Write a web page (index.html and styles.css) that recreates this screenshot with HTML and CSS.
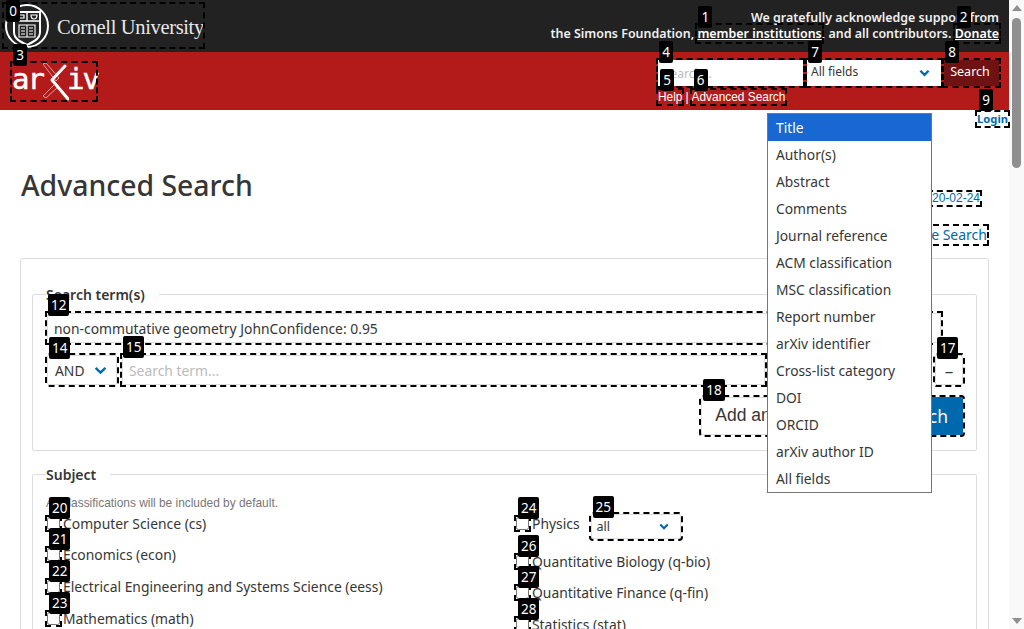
FILE: index.html
```html
<!DOCTYPE html>
<html lang="en">
<head>
<meta charset="utf-8">
<title>Advanced Search | arXiv</title>
<link rel="stylesheet" href="styles.css">
</head>
<body>
<div class="app">
<header class="topbar">
  <a class="mark cornell"><span class="badge">0</span>
    <svg class="seal" viewBox="0 0 46 46" width="46" height="46" aria-hidden="true">
      <circle cx="23" cy="23" r="21" fill="none" stroke="#fff" stroke-width="2"/>
      <path d="M10 9h26v20c0 7-7 10-13 13-6-3-13-6-13-13z" fill="#222" stroke="#fff" stroke-width="2"/>
      <path d="M10 18h26M23 9v9" stroke="#fff" stroke-width="1.400"/>
      <path d="M14 12h6v3h-6zM27 12h6c0 3-1.500 4-3 4s-3-1-3-4z" fill="none" stroke="#fff" stroke-width="1.200"/>
      <path d="M15 22h16v12H15zM23 22v12M17 25h4M17 28h4M17 31h4M25 25h4M25 28h4M25 31h4" fill="none" stroke="#fff" stroke-width="1.100"/>
    </svg>
    <span class="cornell-name">Cornell University</span>
  </a>
  <p class="thanks">We gratefully acknowledge support from<br>the Simons Foundation, <a class="mark thanks-link"><span class="badge">1</span>member institutions</a>, and all contributors. <a class="mark thanks-link"><span class="badge badge-donate">2</span>Donate</a></p>
</header>

<div class="redbar">
  <a class="mark logo"><span class="badge">3</span>
    <span class="logo-text">ar</span>
    <svg class="logo-x" viewBox="0 0 26 40" width="26" height="40" aria-hidden="true">
      <path d="M0 2 3 1 16 16 13 19Z" fill="none" stroke="#eeb9b9" stroke-width="0.800"/>
      <path d="M12 22 15 25 3 36 0 34Z" fill="none" stroke="#eeb9b9" stroke-width="0.800"/>
      <path d="M22 4 9 18 25 37" fill="none" stroke="#fff" stroke-width="3" stroke-linecap="round" stroke-linejoin="round"/>
    </svg>
    <span class="logo-text">iv</span>
  </a>
  <div class="quick">
    <div class="quick-row">
      <div class="mark"><span class="badge">4</span><input class="quick-input" placeholder="Search..."></div>
      <div class="mark quick-select"><span class="badge">7</span><span class="quick-value">All fields</span>
        <svg class="chev" viewBox="0 0 12 8" width="11" height="8" aria-hidden="true"><path d="M1.500 1.500 6 6l4.500-4.500" fill="none" stroke="#0068ac" stroke-width="2.500"/></svg>
      </div>
      <button class="mark quick-go" type="button"><span class="badge">8</span>Search</button>
    </div>
    <div class="quick-links">
      <a class="mark"><span class="badge">5</span>Help</a>
      <span class="sep">|</span>
      <a class="mark"><span class="badge">6</span>Advanced Search</a>
    </div>
  </div>
</div>

<div class="loginrow"><a class="mark login"><span class="badge">9</span>Login</a></div>

<main class="page">
  <div class="page-head">
    <h1>Advanced Search</h1>
    <div class="page-side">
      <a class="mark date"><span class="badge">10</span>Search v0.5.6 released 2020-02-24</a>
      <a class="mark simple"><span class="badge">11</span>Simple Search</a>
    </div>
  </div>

  <form class="card">
    <fieldset class="group terms">
      <legend>Search term(s)</legend>
      <div class="mark term-main"><span class="badge">12</span><input class="field" value="non-commutative geometry JohnConfidence: 0.95"></div>
      <div class="term-row">
        <div class="mark select op"><span class="badge">14</span><span>AND</span>
          <svg class="chev" viewBox="0 0 12 8" width="13" height="9" aria-hidden="true"><path d="M1.500 1.500 6 6l4.500-4.500" fill="none" stroke="#0068ac" stroke-width="2.200"/></svg>
        </div>
        <div class="mark term-input"><span class="badge">15</span><input class="field" placeholder="Search term..."></div>
        <div class="term-hidden"></div>
        <button class="mark minus" type="button"><span class="badge">17</span>–</button>
      </div>
      <div class="term-actions">
        <button class="mark add" type="button"><span class="badge">18</span>Add another term +</button>
        <button class="mark go" type="button"><span class="badge">19</span>Search</button>
      </div>
    </fieldset>

    <fieldset class="group subject">
      <legend>Subject</legend>
      <p class="help">All classifications will be included by default.</p>
      <div class="subject-grid">
        <div class="subject-col">
          <label class="check"><span class="mark box"><span class="badge">20</span><input type="checkbox"></span>Computer Science (cs)</label>
          <label class="check"><span class="mark box"><span class="badge">21</span><input type="checkbox"></span>Economics (econ)</label>
          <label class="check"><span class="mark box"><span class="badge">22</span><input type="checkbox"></span>Electrical Engineering and Systems Science (eess)</label>
          <label class="check"><span class="mark box"><span class="badge">23</span><input type="checkbox"></span>Mathematics (math)</label>
        </div>
        <div class="subject-col right">
          <div class="physics">
            <label class="check"><span class="mark box"><span class="badge">24</span><input type="checkbox"></span>Physics</label>
            <div class="mark select phys"><span class="badge">25</span><span>all</span>
              <svg class="chev" viewBox="0 0 12 8" width="10" height="7" aria-hidden="true"><path d="M1.500 1.500 6 6l4.500-4.500" fill="none" stroke="#0068ac" stroke-width="2.500"/></svg>
            </div>
          </div>
          <label class="check"><span class="mark box"><span class="badge">26</span><input type="checkbox"></span>Quantitative Biology (q-bio)</label>
          <label class="check"><span class="mark box"><span class="badge">27</span><input type="checkbox"></span>Quantitative Finance (q-fin)</label>
          <label class="check"><span class="mark box"><span class="badge">28</span><input type="checkbox"></span>Statistics (stat)</label>
        </div>
      </div>
    </fieldset>
  </form>
</main>
</div>

<aside class="scrollbar" aria-hidden="true">
  <span class="arrow-up"></span>
  <span class="thumb"></span>
  <span class="track"></span>
  <span class="arrow-down"></span>
</aside>

<ul class="popup">
  <li class="on">Title</li>
  <li>Author(s)</li>
  <li>Abstract</li>
  <li>Comments</li>
  <li>Journal reference</li>
  <li>ACM classification</li>
  <li>MSC classification</li>
  <li>Report number</li>
  <li>arXiv identifier</li>
  <li>Cross-list category</li>
  <li>DOI</li>
  <li>ORCID</li>
  <li>arXiv author ID</li>
  <li>All fields</li>
</ul>
</body>
</html>
```
FILE: styles.css
```css
* { box-sizing: border-box; }
html, body { height: 100%; }
body {
  margin: 0;
  display: flex;
  position: relative;
  overflow: hidden;
  background: #fff;
  color: #363636;
  font-family: "Noto Sans", sans-serif;
  font-size: 13.87px;
}
a { text-decoration: none; color: inherit; }
.app { flex: 1; min-width: 0; }

/* scrollbar */
.scrollbar {
  flex: none;
  width: 15px;
  background: #f9f9f9;
  display: flex;
  flex-direction: column;
  align-items: center;
  padding: 5px 0;
}
.arrow-up, .arrow-down {
  flex: none;
  width: 0;
  height: 0;
  border-left: 5px solid transparent;
  border-right: 5px solid transparent;
}
.arrow-up { border-bottom: 6px solid #8f8f8f; }
.arrow-down { border-top: 6px solid #8f8f8f; }
.thumb {
  flex: none;
  width: 9px;
  height: 150px;
  margin-top: 7px;
  border-radius: 5px;
  background: #8f8f8f;
}
.track { flex: 1; }

.mark { position: relative; outline: 2px dashed #000; }
.badge {
  position: absolute;
  top: -19px;
  left: 1px;
  z-index: 5;
  height: 22px;
  min-width: 14px;
  padding: 0 3px;
  background: #000;
  color: #fff;
  border-radius: 2px;
  font: 400 13.5px/22px "Noto Sans", sans-serif;
  text-align: center;
  text-decoration: none;
  white-space: nowrap;
}

/* top bar */
.topbar {
  height: 52px;
  background: #222;
  display: flex;
  justify-content: space-between;
  padding: 4px 10px 0 4px;
  color: #fff;
}
.cornell {
  display: flex;
  align-items: center;
  width: 199px;
  height: 43px;
  gap: 7px;
}
.cornell .badge { left: 2px; top: -4px; }
.seal { flex: none; margin-top: 1px; }
.cornell-name {
  margin-top: 3px;
  font: 400 20.5px/1 "Liberation Serif", serif;
  color: #e8e8e8;
  letter-spacing: -0.35px;
  white-space: nowrap;
}
.thanks {
  margin: 6px 0 0;
  font-weight: 600;
  font-size: 12.45px;
  line-height: 16px;
  text-align: right;
  color: #f0f0f0;
}
.thanks-link { text-decoration: underline; color: #fff; }
.badge-donate { left: 2px; }

/* red bar */
.redbar {
  height: 58px;
  background: #b31b1b;
  display: flex;
  justify-content: space-between;
  padding: 8px 10px 0 12px;
}
.logo {
  display: flex;
  align-items: center;
  width: 84px;
  height: 37px;
  margin-top: 3px;
}
.logo-text {
  font: 400 29px/1 "DejaVu Sans Mono", monospace;
  color: #fff;
  letter-spacing: -2px;
  margin-top: -5px;
  -webkit-text-stroke: 0.5px #fff;
}
.logo-x { flex: none; margin: 0 -2px 0 0; }
.quick { display: flex; flex-direction: column; width: 341px; }
.quick-row { display: flex; height: 26px; gap: 4px; }
.quick-input {
  display: block;
  width: 145px;
  height: 26px;
  border: 0;
  padding: 0 6px;
  font: 12px "Noto Sans", sans-serif;
  background: #fff;
}
.quick-input::placeholder { color: #bbb; }
.quick-select {
  width: 134px;
  background: #fff;
  color: #363636;
  font-size: 12px;
  display: flex;
  align-items: center;
  justify-content: space-between;
  padding: 0 11px 1px 4px;
}
.quick-value { margin-top: -2px; }
.quick-go {
  width: 55px;
  margin-left: -1px;
  border: 0;
  padding: 0 3px 3px 0;
  background: #6e1212;
  color: #fff;
  font: 12.500px "Noto Sans", sans-serif;
}
.quick-links {
  display: flex;
  gap: 3px;
  margin-top: 4px;
  font: 11.9px/14px "Liberation Sans", sans-serif;
  color: #fff;
}
.quick-links .badge { top: -21px; left: 2px; }

/* login */
.loginrow { display: flex; justify-content: flex-end; height: 0; }
.login {
  margin: 2px 1px 0 0;
  height: 14px;
  font-size: 11.200px;
  font-weight: 700;
  line-height: 14px;
  color: #0068ac;
  white-space: nowrap;
}
.login .badge { top: -23px; left: 2px; }

/* page */
.page { padding: 0 20px; }
.page-head { display: flex; justify-content: space-between; height: 148px; }
h1 {
  margin: 57px 0 0 1px;
  font-size: 28.4px;
  font-weight: 500;
  line-height: 36px;
  color: #363636;
}
.page-side { display: flex; flex-direction: column; align-items: flex-end; }
.date {
  margin: 82px 9px 0 0;
  font: 12px/13px "Liberation Sans", sans-serif;
  color: #0068ac;
}
.simple {
  margin: 21px 2px 0 0;
  font-size: 14px;
  line-height: 18px;
  color: #0068ac;
}
.card {
  border: 1px solid #ddd;
  border-radius: 3px;
  padding: 25px 11px 0;
}
.group {
  margin: 0;
  border: 1px solid #ddd;
  border-radius: 2px;
  padding: 9px 13px 15px;
  min-width: 0;
}
.group legend {
  margin-left: 0;
  padding: 2px 14px 0 0;
  font-size: 14px;
  font-weight: 600;
  line-height: 18px;
  color: #363636;
}
.field {
  display: block;
  width: 100%;
  height: 30px;
  border: 1px solid #ddd;
  border-radius: 2px;
  padding: 0 6px;
  font: 13.87px "Noto Sans", sans-serif;
  color: #363636;
  background: #fff;
}
.field::placeholder { color: #bbb; }
.term-main { width: 894px; margin-left: 1px; }
.term-row { display: flex; margin: 12px 0 0 1px; height: 30px; }
.select {
  display: flex;
  align-items: center;
  justify-content: space-between;
  background: #fff;
  border: 1px solid #ddd;
  border-radius: 2px;
}
.op { width: 70px; padding: 0 9px 0 7px; }
.term-input { width: 643px; margin-left: 5px; }
.term-hidden { width: 170px; }
.minus {
  width: 28px;
  height: 30px;
  border: 1px solid #ddd;
  border-radius: 2px;
  background: #fff;
  color: #363636;
  padding: 0;
  font: 17px "Noto Sans", sans-serif;
}
.term-actions {
  display: flex;
  justify-content: flex-end;
  gap: 4px;
  margin: 12px 0 0;
  height: 38px;
}
.add {
  border: 1px solid #ddd;
  border-radius: 2px;
  background: #fff;
  color: #363636;
  padding: 0 7px 2px 13px;
  font: 17.5px "Liberation Sans", sans-serif;
}
.go {
  border: 0;
  border-radius: 2px;
  background: #0068ac;
  color: #fff;
  padding: 0 15px 1px;
  font: 17.5px "Noto Sans", sans-serif;
}
.subject { padding: 12px 13px 20px; margin-top: 13px; }
.help {
  margin: 0 0 3px;
  font: 11.9px/14px "Liberation Sans", sans-serif;
  color: #777;
}
.subject-grid { display: grid; grid-template-columns: 469px 1fr; }
.subject-col { display: flex; flex-direction: column; align-items: flex-start; }
.check {
  display: flex;
  align-items: center;
  height: 20px;
  margin-bottom: 11.8px;
  white-space: nowrap;
}
.box { display: flex; flex: none; width: 13px; height: 13px; margin: 0 3px 0 1px; }
.box input { margin: 0; width: 13px; height: 13px; }
.box .badge { top: -20px; left: 2px; }
.physics { display: flex; align-items: flex-start; height: 38px; }
.phys {
  width: 90px;
  height: 25px;
  margin: 1px 0 0 11px;
  padding: 0 11px 0 5px;
  font-size: 12.500px;
}
.right .check { margin-bottom: 11.7px; }
.physics .check { margin: 0; }

/* open dropdown */
.popup {
  position: absolute;
  left: 767px;
  top: 113px;
  z-index: 10;
  width: 165px;
  margin: 0;
  padding: 0;
  border: 1px solid #767676;
  background: #fff;
  list-style: none;
}
.popup li {
  height: 27px;
  padding: 0 8px;
  line-height: 27px;
  font-size: 13.8px;
  color: #363636;
  white-space: nowrap;
}
.popup .on { background: #1967d2; color: #fff; }
.chev { flex: none; }
```
